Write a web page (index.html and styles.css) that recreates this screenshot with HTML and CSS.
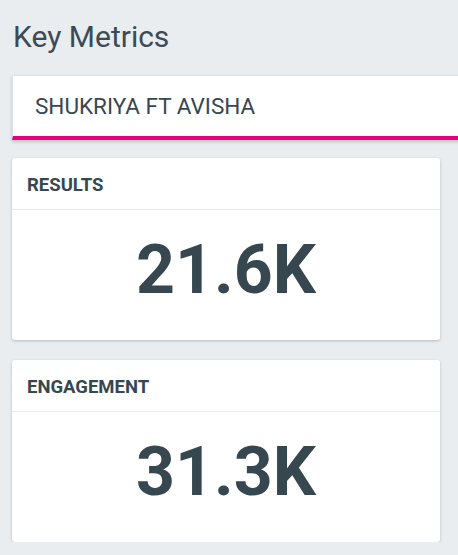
FILE: index.html
```html
<!DOCTYPE html>
<html>
<head>
<meta charset="utf-8">
<link rel="stylesheet" href="styles.css">
</head>
<body>
<div class="page">
  <h1 class="title">Key Metrics</h1>
  <div class="select">SHUKRIYA FT AVISHA</div>
  <div class="card">
    <div class="card-head">RESULTS</div>
    <div class="card-body">21.6K</div>
  </div>
  <div class="card">
    <div class="card-head">ENGAGEMENT</div>
    <div class="card-body">31.3K</div>
  </div>
</div>
</body>
</html>
```
FILE: styles.css
```css
html, body {
  margin: 0;
  padding: 0;
  background: #e9edf0;
  overflow: hidden;
}
body {
  font-family: Roboto, "Liberation Sans", sans-serif;
  color: #37474f;
}
.page {
  padding: 0 18px 0 12px;
  display: flex;
  flex-direction: column;
}
.title {
  margin: 19px 0 0 1px;
  font-size: 30px;
  font-weight: 400;
  line-height: 35px;
  color: #3b4a53;
}
.select {
  margin-top: 21px;
  margin-right: -40px;
  background: #fff;
  border-top: 1px solid #dde2e6;
  border-left: 1px solid #dde2e6;
  border-bottom: 4px solid #e4007c;
  box-shadow: 0 2px 3px rgba(0,0,0,0.18);
  padding: 17px 22px 17px 22px;
  font-size: 22.5px;
  line-height: 26px;
  color: #37474f;
}
.card {
  margin-top: 18px;
  background: #fff;
  border-radius: 3px;
  box-shadow: 0 1px 3px rgba(0,0,0,0.22);
  display: flex;
  flex-direction: column;
}
.card + .card {
  margin-top: 20px;
}
.card-head {
  padding: 16px 15px 13px;
  font-size: 18.5px;
  line-height: 22px;
  font-weight: 700;
  color: #37474f;
  border-bottom: 1px solid #e8ebee;
}
.card-body {
  padding: 20px 0 30px;
  text-align: center;
  font-size: 68px;
  line-height: 80px;
  font-weight: 700;
  color: #37474f;
}
```
